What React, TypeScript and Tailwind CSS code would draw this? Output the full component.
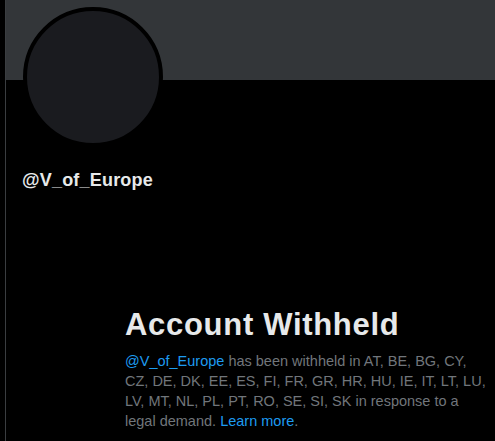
export default function App() {
    return (
        <div className="h-[441px] w-[495px] overflow-hidden bg-black font-['Liberation_Sans',Arial,sans-serif]">
            <div className="ml-[5px] flex h-full flex-col border-l border-[#3a3d40]">
                {/* banner */}
                <div className="h-[80px] w-full shrink-0 bg-[#333639]" />

                {/* avatar */}
                <div className="-mt-[73px] ml-[17px] h-[140px] w-[140px] shrink-0 rounded-full border-4 border-black bg-[#1a1b1f]" />

                {/* handle */}
                <div className="mt-[21px] ml-[16px] shrink-0 text-[18px] leading-[24px] font-bold tracking-[0.2px] text-[#e7e9ea]">@V_of_Europe</div>

                {/* withheld notice */}
                <div className="mt-[115px] ml-[119px] flex shrink-0 flex-col gap-[8px]">
                    <h2 className="text-[31px] leading-[36px] font-extrabold tracking-[0.7px] text-[#e7e9ea]">Account Withheld</h2>
                    <p className="text-[14.5px] leading-[20px] whitespace-nowrap text-[#71767b]">
                        <span className="text-[#1d9bf0]">@V_of_Europe</span> has been withheld in AT, BE, BG, CY,
                        <br />
                        CZ, DE, DK, EE, ES, FI, FR, GR, HR, HU, IE, IT, LT, LU,
                        <br />
                        LV, MT, NL, PL, PT, RO, SE, SI, SK in response to a
                        <br />
                        legal demand. <span className="text-[#1d9bf0]">Learn more</span>.
                    </p>
                </div>
            </div>
        </div>
    );
}
